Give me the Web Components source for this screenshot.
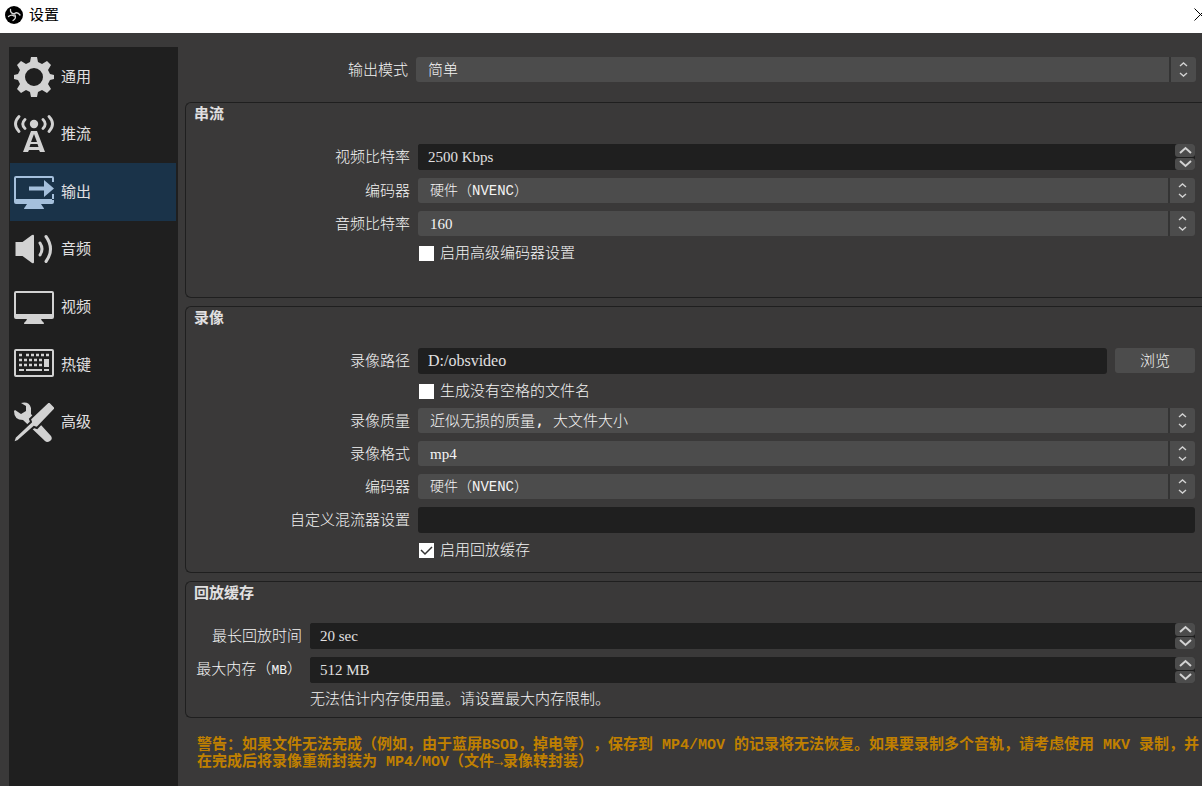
<!DOCTYPE html>
<html lang="zh-CN">
<head>
<meta charset="utf-8">
<title>设置</title>
<style>
  :root {
    --bg: #3a3939; --panel: #1f1f1f; --button: #4c4c4c; --text: #e1e0e1; --bright: #f4f4f4;
    --ui: "Liberation Sans", "Noto Sans CJK SC", sans-serif;
    --serif: "Liberation Serif", "Noto Sans CJK SC", serif;
    --mono: "Liberation Mono", "Noto Sans CJK SC", monospace;
  }
  body { margin: 0; background: var(--bg); color: var(--text); font: 15px/16px var(--ui); text-spacing-trim: space-all; }
</style>
</head>
<body>
<settings-window>
  <title-bar slot="title">设置</title-bar>
  <nav-list slot="nav">
    <nav-item icon="gear">通用</nav-item>
    <nav-item icon="antenna">推流</nav-item>
    <nav-item icon="output" selected>输出</nav-item>
    <nav-item icon="audio">音频</nav-item>
    <nav-item icon="monitor">视频</nav-item>
    <nav-item icon="keyboard">热键</nav-item>
    <nav-item icon="tools">高级</nav-item>
  </nav-list>
  <combo-field class="mode" label="输出模式" value="简单"></combo-field>
  <group-box class="stream" heading="串流">
    <spin-field label="视频比特率" value="2500 Kbps"></spin-field>
    <combo-field label="编码器" value="硬件（NVENC）" face="compact"></combo-field>
    <combo-field label="音频比特率" value="160"></combo-field>
    <check-field label="启用高级编码器设置"></check-field>
  </group-box>
  <group-box class="record" heading="录像">
    <path-field label="录像路径" value="D:/obsvideo" action="浏览"></path-field>
    <check-field label="生成没有空格的文件名"></check-field>
    <combo-field label="录像质量" value="近似无损的质量, 大文件大小" face="mono"></combo-field>
    <combo-field label="录像格式" value="mp4"></combo-field>
    <combo-field label="编码器" value="硬件（NVENC）" face="compact"></combo-field>
    <path-field label="自定义混流器设置" value=""></path-field>
    <check-field label="启用回放缓存" checked></check-field>
  </group-box>
  <group-box class="replay" heading="回放缓存">
    <spin-field label="最长回放时间" value="20 sec"></spin-field>
    <spin-field label="最大内存（MB）" value="512 MB"></spin-field>
    <hint-text>无法估计内存使用量。请设置最大内存限制。</hint-text>
  </group-box>
  <warning-text>警告：如果文件无法完成（例如，由于蓝屏BSOD，掉电等），保存到 MP4/MOV 的记录将无法恢复。如果要录制多个音轨，请考虑使用 MKV 录制，并在完成后将录像重新封装为 MP4/MOV（文件→录像转封装）</warning-text>
</settings-window>

<script>
const icons = {
  gear: '<path fill-rule="evenodd" d="M17 0h6l1 5 4 2 5-3 4 4-3 5 2 4 4 1v4l-4 1-2 4 3 5-4 4-5-3-4 2-1 5h-6l-1-5-4-2-5 3-4-4 3-5-2-4-4-1v-4l4-1 2-4-3-5 4-4 5 3 4-2zM20 11a9 9 0 1 0 0 18a9 9 0 0 0 0-18z"/>',
  antenna: '<circle cx="20" cy="10" r="4.200"/><g fill="none" stroke="currentColor" stroke-width="2.800" stroke-linecap="round"><path d="M5 2.500Q-2 10 5 17.500M11 5.500Q6.500 10 11 14.500M35 2.500Q42 10 35 17.500M29 5.500Q33.500 10 29 14.500"/></g><path fill-rule="evenodd" d="M17 17h6l8 21h-5l-1-2H15l-1 2H9zM20 20l-3 8h6zM16.500 30l-1 3h9l-1-3z"/>',
  output: '<path fill-rule="evenodd" d="M2 4h36q2 0 2 2v4h-2V6H2v21h38v3q0 2-2 2h-11l2 3q1 1 1 2H10q0-1 1-2l2-3H2q-2 0-2-2V6q0-2 2-2zM38 22h2v6h-2z"/><path d="M15 14.500h15V8l10 8.500L30 25v-6.500H15z"/>',
  audio: '<path d="M1.500 13h7L18 6q2-1 2 1v26q0 2-2 1l-9.500-7h-7z"/><g fill="none" stroke="currentColor" stroke-width="3" stroke-linecap="round"><path d="M26 14q4 6 0 12M32 7.500q9 12.500 0 25"/></g>',
  monitor: '<path fill-rule="evenodd" d="M2 4h36q2 0 2 2v24q0 2-2 2H27l1 2q2 1 2 3H10q0-2 2-3l1-2H2q-2 0-2-2V6q0-2 2-2zM2 6v21h36V6z"/>',
  keyboard: '<path fill-rule="evenodd" d="M2 4h36q2 0 2 2v24q0 2-2 2H2q-2 0-2-2V6q0-2 2-2zM2 6v24h36V6z"/><path stroke="currentColor" stroke-width="2.500" stroke-dasharray="3 2" fill="none" d="M5 10h5m2 0h23M5 15h23M5 20h23"/><path d="M30 14h5v8h-5zM5 24h5v2H5zM12 24h16v2H12zM30 24h5v2h-5z"/>',
  tools: '<path d="M1 8l6 4 5-3V4L7 1q8-2 10 5v6l20 22q2 3-1 5t-5 0L9 18Q0 18 0 9z"/><path stroke="#1f1f1f" stroke-width="2" d="M35-1l7 7-19 20-3-1L4 39l-5 2 2-6 16-15-1-3z"/>'
};

/* Base: renders a template string into an open shadow root. */
class View extends HTMLElement {
  connectedCallback() {
    if (this.shadowRoot) return;
    const t = document.createElement('template');
    t.innerHTML = `<style>*{box-sizing:border-box}:host{display:block}${this.css()}</style>${this.html()}`;
    this.attachShadow({ mode: 'open' }).append(t.content.cloneNode(true));
  }
  css() { return ''; }
  html() { return '<slot></slot>'; }
  attr(name) { return this.getAttribute(name) || ''; }
}

customElements.define('settings-window', class extends View {
  css() { return `
    :host{display:flex;flex-direction:column;min-height:100vh;overflow:hidden}
    .body{display:flex;flex:1;padding:14px 0 0 9px;gap:7px}
    nav{flex:0 0 169px;background:var(--panel)}
    main{flex:1;min-width:0;padding-top:10px}
    ::slotted(.mode){margin:0 6px 20px 0}
    ::slotted(.stream){--end:35px;margin-bottom:8px}
    ::slotted(.record){--end:13px;margin-bottom:8px}
    ::slotted(.replay){--end:10px;--label:116px}`; }
  html() { return `<slot name="title"></slot><div class="body"><nav><slot name="nav"></slot></nav><main><slot></slot></main></div>`; }
});

customElements.define('title-bar', class extends View {
  css() { return `
    :host{background:#fff;color:#000;overflow:hidden}
    header{display:flex;align-items:center;height:33px;padding:0 0 4px 5px;gap:6px}
    h1{font:inherit;margin:0;flex:1}
    svg{display:block}
    button{border:0;background:none;padding:0;margin-right:-5px;color:#000}`; }
  html() { return `<header>
    <svg width="18" height="18" viewBox="0 0 18 18"><circle cx="9" cy="9" r="9"/><g fill="none" stroke="#ddd" stroke-width="1.300" stroke-linecap="round"><path d="M5.500 3.500Q5 7 9 8M9.500 7.500Q12.500 5.500 15 9M10 9Q11.500 12.500 8 14.500M3.500 10.500Q6.500 8 9 10"/></g></svg>
    <h1><slot></slot></h1>
    <button aria-label="关闭"><svg width="13" height="13" viewBox="0 0 13 13"><path d="M.5.5l12 12M12.500.5l-12 12" stroke="#000" fill="none"/></svg></button></header>`; }
});

customElements.define('nav-list', class extends View {
  css() { return `:host{display:grid;grid-auto-rows:1fr;height:403px;padding:1px 2px 0 1px}`; }
});

customElements.define('nav-item', class extends View {
  css() { return `
    a{display:flex;align-items:center;height:100%;gap:7px;padding-left:4px;color:var(--text);text-decoration:none}
    svg{width:40px;height:40px;fill:currentColor;color:#d2d2d2}
    :host([selected]){background:#1a3349}
    :host([selected]) svg{color:#a5c0dc}`; }
  html() { return `<a href="#${this.attr('icon')}"><svg viewBox="0 0 40 40">${icons[this.attr('icon')]}</svg><slot></slot></a>`; }
});

customElements.define('group-box', class extends View {
  css() { return `
    section{border:1px solid #1f1f1f;border-right:0;border-radius:6px 0 0 6px;padding:3px 7px var(--end) 0}
    h2{font:bold 15px/16px var(--ui);margin:0 0 22px 8px}
    .rows{display:grid;gap:8px}`; }
  html() { return `<section><h2>${this.attr('heading')}</h2><div class="rows"><slot></slot></div></section>`; }
});

/* Shared frame of every labelled row: right-aligned label, then the control. */
class Field extends View {
  css() { return `
    :host{font-weight:300;color:var(--bright)}
    .row{display:grid;grid-template-columns:var(--label,224px) minmax(0,1fr);column-gap:8px;align-items:center}
    :host(.mode) .row{grid-template-columns:223px minmax(0,1fr)}
    .label{text-align:right;white-space:nowrap}
    .label span{font:13px/16px var(--mono)}
    input,select,button{color:inherit;border:0;margin:0;border-radius:3px}
    .text{width:100%;height:26px;background:var(--panel);color:var(--text);font:15px/16px var(--serif);padding:0 10px}
    svg{display:block;fill:none;stroke:#d2d2d2}
    ${this.extra()}`; }
  extra() { return ''; }
  html() { return `<div class="row"><label class="label" for="c">${this.attr('label').replace(/[A-Z]+/g, '<span>$&</span>')}</label>${this.control()}</div>`; }
}

customElements.define('combo-field', class extends Field {
  extra() { return `
    .combo{display:grid;grid-template-columns:minmax(0,1fr) 27px}
    select,.arrows{grid-row:1}
    select{grid-column:1/3;appearance:none;height:25px;width:100%;padding:0 36px 0 12px;background:var(--button);font:300 15px/16px var(--serif)}
    :host([face=mono]) select{font-family:"DejaVu Sans Mono","Noto Sans CJK SC",monospace}
    :host([face=compact]) select{font:300 14px/16px var(--mono)}
    .arrows{grid-column:2;z-index:1;pointer-events:none;display:grid;place-items:center;border-left:2px solid #343434}`; }
  control() { return `<div class="combo"><select id="c"><option>${this.attr('value')}</option></select>
    <span class="arrows"><svg width="9" height="15" viewBox="0 0 9 15" stroke-width="1.400"><path d="M1 4l3.500-3L8 4M1 11l3.500 3L8 11"/></svg></span></div>`; }
});

customElements.define('spin-field', class extends Field {
  extra() { return `
    .spin{display:grid;grid-template-columns:minmax(0,1fr) 20px;background:var(--panel);border-radius:3px}
    .steps{display:grid;grid-template-rows:1fr 1fr;gap:1px}
    button{background:var(--button);padding:0;display:grid;place-items:center}`; }
  control() { return `<div class="spin"><input class="text" id="c" value="${this.attr('value')}"><div class="steps">
    <button aria-label="增加"><svg width="13" height="8" viewBox="0 0 13 8" stroke-width="2"><path d="M1 7l5.500-5L12 7"/></svg></button>
    <button aria-label="减少"><svg width="13" height="8" viewBox="0 0 13 8" stroke-width="2"><path d="M1 1l5.500 5L12 1"/></svg></button></div></div>`; }
});

customElements.define('path-field', class extends Field {
  extra() { return `
    .line{display:flex;gap:8px}
    .text{flex:1;min-width:0;font-size:16px}
    button{width:80px;height:25px;background:var(--button);font:300 15px/16px var(--ui)}`; }
  control() {
    const action = this.attr('action');
    return `<div class="line"><input class="text" id="c" value="${this.attr('value')}">${action ? `<button>${action}</button>` : ''}</div>`;
  }
});

customElements.define('check-field', class extends View {
  css() { return `
    :host{font-weight:300;color:var(--bright);padding-left:233px}
    label{display:flex;align-items:center;gap:6px;height:18px}
    .tick{display:grid}
    input,svg{grid-area:1/1}
    input{appearance:none;width:15px;height:15px;margin:0;background:#fff}
    svg{display:none;pointer-events:none;fill:none;stroke:#333;stroke-width:1.500}
    input:checked+svg{display:block}`; }
  html() { return `<label><span class="tick"><input type="checkbox" ${this.hasAttribute('checked') ? 'checked' : ''}><svg width="15" height="15" viewBox="0 0 15 15"><path d="M2 7l4 4 7-7"/></svg></span>${this.attr('label')}</label>`; }
});

customElements.define('hint-text', class extends View {
  css() { return `:host{padding-left:124px;font-weight:300;color:var(--bright)}`; }
});

customElements.define('warning-text', class extends View {
  css() { return `
    :host{margin:19px 0 0 12px;color:#c08000}
    p{margin:0;font:bold 15px/17px var(--mono);word-break:break-all}`; }
  html() { return `<p>${this.textContent}</p>`; }
});
</script>
</body>
</html>
